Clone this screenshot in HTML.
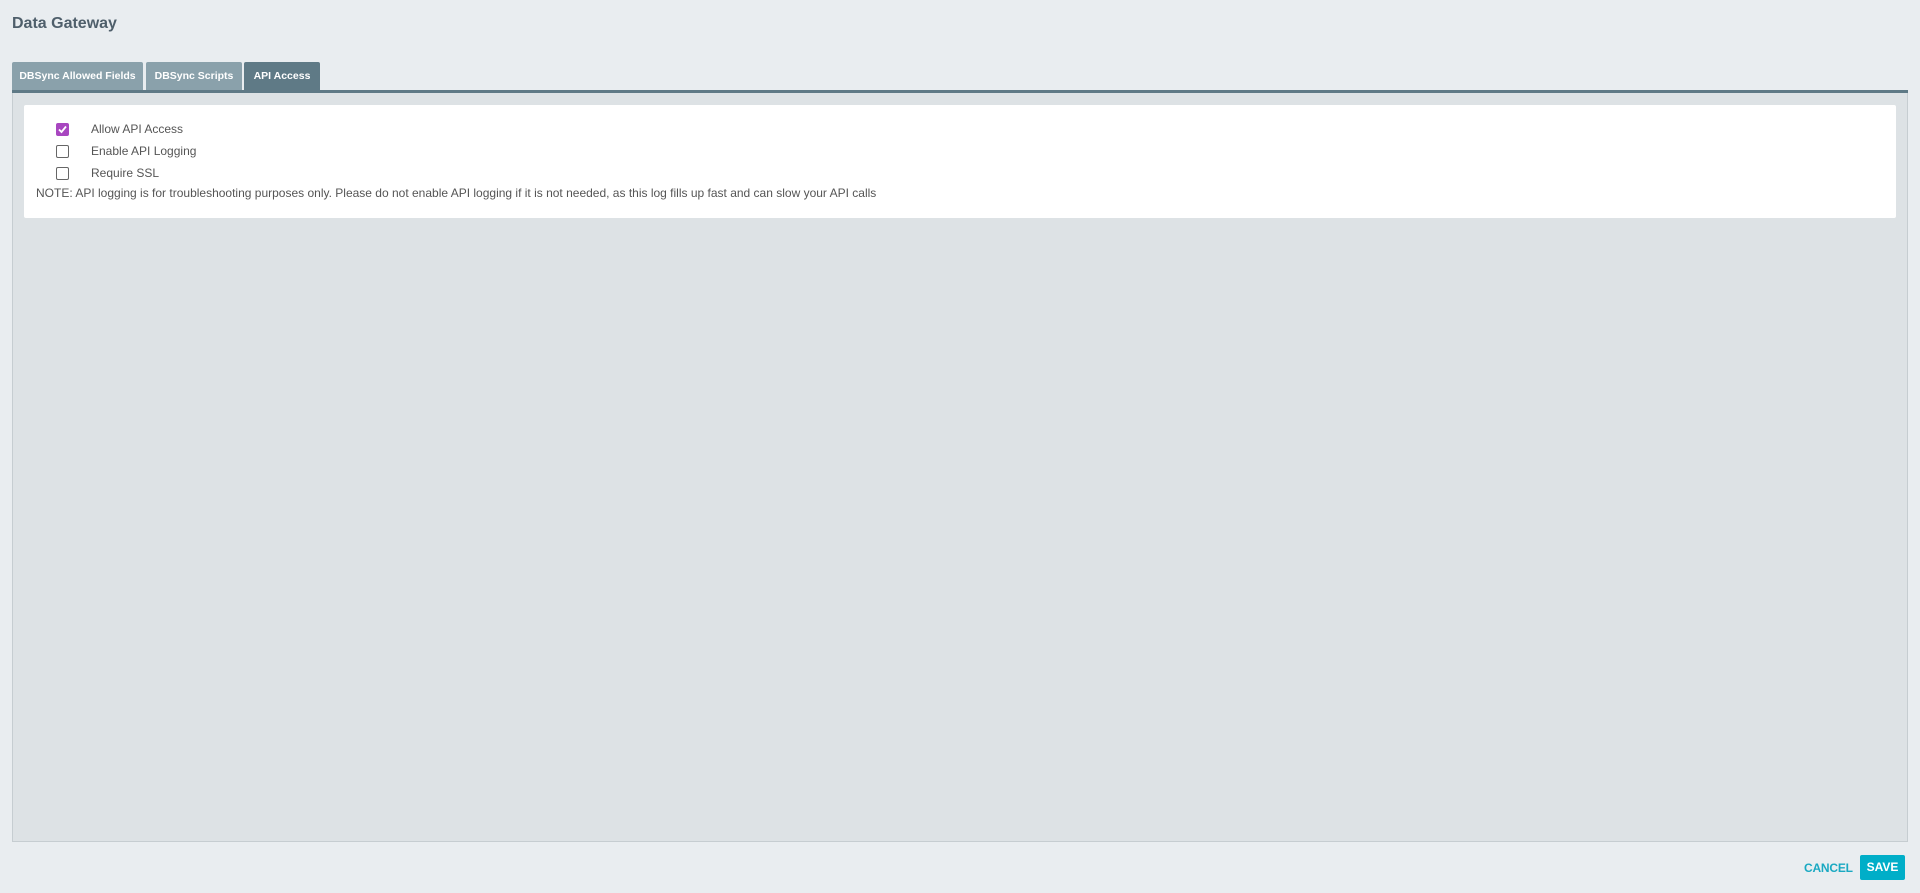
<!DOCTYPE html>
<html><head><meta charset="utf-8"><style>
*{box-sizing:border-box;margin:0;padding:0}
body{width:1920px;height:893px;background:#e9edf0;font-family:"Liberation Sans",sans-serif;position:relative;overflow:hidden}
.title{position:absolute;left:12px;top:15px;font-size:16px;color:#4f5f6b;font-weight:bold}
.tab{position:absolute;top:62px;height:28px;background:#8aa1ab;color:#fff;font-weight:bold;font-size:10.5px;line-height:28px;text-align:center;border-radius:2px 2px 0 0}
.band{position:absolute;left:12px;top:90px;width:1896px;height:3px;background:#5f7a86}
.panel{position:absolute;left:12px;top:93px;width:1896px;height:749px;background:#dde2e5;border:1px solid #c6cdd1;border-top:none}
.box{position:absolute;left:24px;top:105px;width:1872px;height:113px;background:#fff;border-radius:2px}
.cb{position:absolute;left:56px;width:13px;height:13px;border:1px solid #666;border-radius:2px;background:#fff}
.cb.on{background:#a846c0;border-color:#a846c0}
.lbl{position:absolute;left:91px;font-size:12px;color:#555}
.note{position:absolute;left:36px;top:186px;font-size:12px;color:#555}
.cancel{position:absolute;left:1804px;top:861px;font-size:12px;font-weight:bold;color:#1aa9c2;letter-spacing:-0.2px}
.save{position:absolute;left:1860px;top:855px;width:45px;height:25px;background:#00aec8;color:#fff;font-weight:bold;font-size:12px;line-height:25px;text-align:center;border-radius:2px}
</style></head><body>
<div class="title">Data Gateway</div>
<div class="tab" style="left:12px;width:131px">DBSync Allowed Fields</div>
<div class="tab" style="left:146px;width:96px">DBSync Scripts</div>
<div class="tab" style="left:244px;width:76px;background:#5f7a86">API Access</div>
<div class="band"></div>
<div class="panel"></div>
<div class="box"></div>
<div class="cb on" style="top:123px"><svg width="13" height="13" viewBox="0 0 13 13" style="position:absolute;left:-1px;top:-1px"><path d="M3 6.5l2.5 2.5L10 3.5" stroke="#fff" stroke-width="1.8" fill="none"/></svg></div>
<div class="lbl" style="top:122px">Allow API Access</div>
<div class="cb" style="top:145px"></div>
<div class="lbl" style="top:144px">Enable API Logging</div>
<div class="cb" style="top:167px"></div>
<div class="lbl" style="top:166px">Require SSL</div>
<div class="note">NOTE: API logging is for troubleshooting purposes only. Please do not enable API logging if it is not needed, as this log fills up fast and can slow your API calls</div>
<div class="cancel">CANCEL</div>
<div class="save">SAVE</div>
</body></html>
